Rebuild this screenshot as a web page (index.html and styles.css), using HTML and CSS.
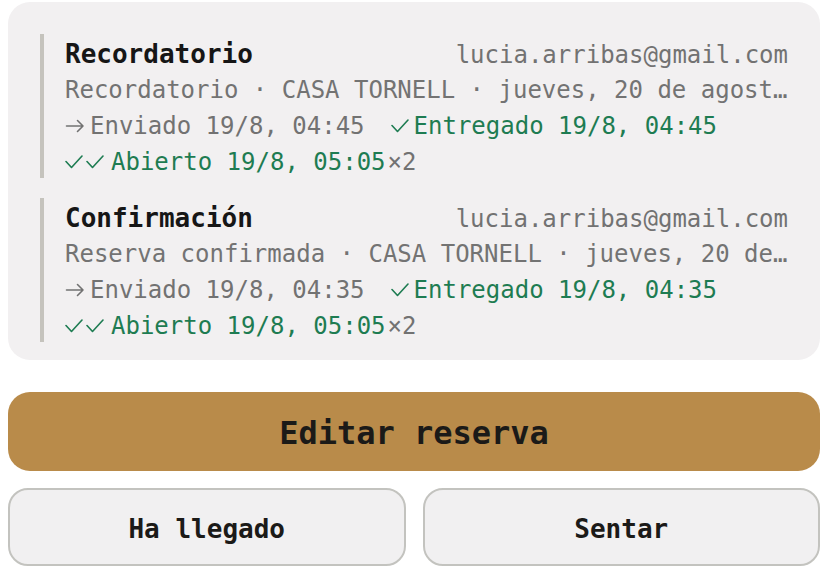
FILE: index.html
```html
<!DOCTYPE html>
<html lang="es">
<head>
<meta charset="utf-8">
<link rel="stylesheet" href="styles.css">
</head>
<body>
<div class="page">
  <section class="card">
    <div class="entry">
      <div class="line head">
        <span class="title">Recordatorio</span>
        <span class="email">lucia.arribas@gmail.com</span>
      </div>
      <div class="line sub">Recordatorio · CASA TORNELL · jueves, 20 de agost…</div>
      <div class="line status">
        <span class="item sent">
          <svg class="arrow" viewBox="0 0 20 14" width="20" height="14"><path d="M1.5 7H18M12.5 1.5L18 7l-5.5 5.5"/></svg>
          <span>Enviado 19/8, 04:45</span>
        </span>
        <span class="item ok">
          <svg class="check" viewBox="0 0 18 14" width="18" height="14"><path d="M1 6.5l5.5 6L17 1"/></svg>
          <span>Entregado 19/8, 04:45</span>
        </span>
      </div>
      <div class="line status">
        <span class="item ok">
          <span class="checks">
            <svg class="check" viewBox="0 0 18 14" width="18" height="14"><path d="M1 6.5l5.5 6L17 1"/></svg>
            <svg class="check" viewBox="0 0 18 14" width="18" height="14"><path d="M1 6.5l5.5 6L17 1"/></svg>
          </span>
          <span>Abierto 19/8, 05:05</span><span class="count">×2</span>
        </span>
      </div>
    </div>
    <div class="entry">
      <div class="line head">
        <span class="title">Confirmación</span>
        <span class="email">lucia.arribas@gmail.com</span>
      </div>
      <div class="line sub">Reserva confirmada · CASA TORNELL · jueves, 20 de…</div>
      <div class="line status">
        <span class="item sent">
          <svg class="arrow" viewBox="0 0 20 14" width="20" height="14"><path d="M1.5 7H18M12.5 1.5L18 7l-5.5 5.5"/></svg>
          <span>Enviado 19/8, 04:35</span>
        </span>
        <span class="item ok">
          <svg class="check" viewBox="0 0 18 14" width="18" height="14"><path d="M1 6.5l5.5 6L17 1"/></svg>
          <span>Entregado 19/8, 04:35</span>
        </span>
      </div>
      <div class="line status">
        <span class="item ok">
          <span class="checks">
            <svg class="check" viewBox="0 0 18 14" width="18" height="14"><path d="M1 6.5l5.5 6L17 1"/></svg>
            <svg class="check" viewBox="0 0 18 14" width="18" height="14"><path d="M1 6.5l5.5 6L17 1"/></svg>
          </span>
          <span>Abierto 19/8, 05:05</span><span class="count">×2</span>
        </span>
      </div>
    </div>
  </section>
  <button class="btn primary">Editar reserva</button>
  <div class="row">
    <button class="btn secondary">Ha llegado</button>
    <button class="btn secondary">Sentar</button>
  </div>
</div>
</body>
</html>
```
FILE: styles.css
```css
* { box-sizing: border-box; }
html, body { margin: 0; padding: 0; background: #ffffff; }
body {
  font-family: "DejaVu Sans Mono", "Liberation Mono", monospace;
  width: 828px;
  height: 580px;
  overflow: hidden;
}
.page {
  padding: 2px 8px 0;
  display: flex;
  flex-direction: column;
}
.card {
  background: #f2f0f1;
  border-radius: 22px;
  padding: 32px 32px 18px;
  display: flex;
  flex-direction: column;
  gap: 20px;
}
.entry {
  border-left: 4px solid #c5c3bd;
  padding-left: 21px;
  display: flex;
  flex-direction: column;
}
.line {
  height: 36px;
  line-height: 36px;
  padding-top: 2px;
  font-size: 24px;
  white-space: nowrap;
  overflow: hidden;
}
.head {
  display: flex;
  justify-content: space-between;
  align-items: baseline;
}
.title {
  font-size: 26px;
  font-weight: bold;
  color: #161616;
}
.email { color: #727272; }
.sub { color: #737373; }
.status {
  padding-top: 4px;
  display: flex;
  align-items: center;
  gap: 26px;
}
.item {
  display: inline-flex;
  align-items: center;
  gap: 5px;
}
.sent { color: #727272; }
.ok { color: #1e7c52; }
.item svg {
  fill: none;
  stroke: currentColor;
  stroke-width: 1.6;
  stroke-linecap: round;
  stroke-linejoin: round;
  flex: none;
}
.checks {
  display: inline-flex;
  gap: 3px;
  margin-right: 2px;
}
.count {
  color: #727272;
  margin-left: -3px;
}
.btn {
  font-family: "DejaVu Sans Mono", "Liberation Mono", monospace;
  font-weight: bold;
  color: #1b1a18;
  cursor: pointer;
  padding: 3px 0 0;
}
.primary {
  margin-top: 32px;
  height: 79px;
  border: none;
  border-radius: 22px;
  background: #b98b4a;
  font-size: 32px;
}
.row {
  margin-top: 17px;
  display: grid;
  grid-template-columns: 1fr 1fr;
  gap: 17px;
}
.secondary {
  height: 78px;
  border: 2px solid #c3c3bf;
  border-radius: 20px;
  background: #f1f0f1;
  font-size: 26px;
}
```
